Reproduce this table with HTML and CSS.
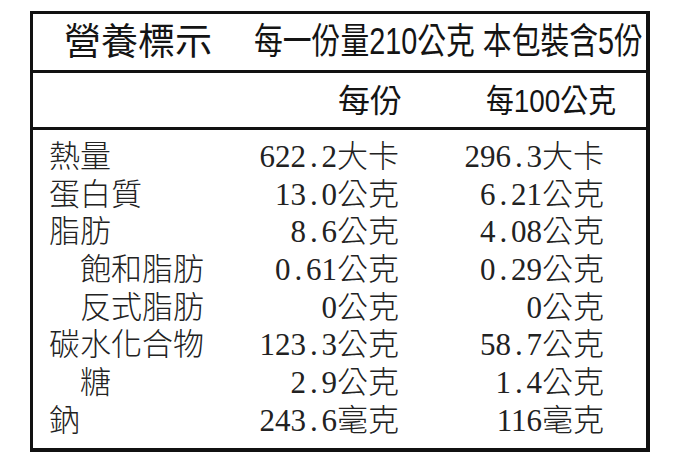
FILE: index.html
```html
<!DOCTYPE html>
<html lang="zh-Hant">
<head>
<meta charset="utf-8">
<title>營養標示</title>
<link rel="stylesheet" href="styles.css">
</head>
<body>
<div class="label">
  <div class="head">
    <span class="title">營養標示</span>
    <span class="serving"><span class="squeeze">每一份量210公克 本包裝含5份</span></span>
  </div>
  <div class="cols">
    <span class="per">每份</span>
    <span class="per100"><span class="squeeze2">每100公克</span></span>
  </div>
  <div class="body">
    <div class="name">熱量</div><div class="v">622<span class="dot">.</span>2大卡</div><div class="v">296<span class="dot">.</span>3大卡</div>
    <div class="name">蛋白質</div><div class="v">13<span class="dot">.</span>0公克</div><div class="v">6<span class="dot">.</span>21公克</div>
    <div class="name">脂肪</div><div class="v">8<span class="dot">.</span>6公克</div><div class="v">4<span class="dot">.</span>08公克</div>
    <div class="name sub">飽和脂肪</div><div class="v">0<span class="dot">.</span>61公克</div><div class="v">0<span class="dot">.</span>29公克</div>
    <div class="name sub">反式脂肪</div><div class="v">0公克</div><div class="v">0公克</div>
    <div class="name">碳水化合物</div><div class="v">123<span class="dot">.</span>3公克</div><div class="v">58<span class="dot">.</span>7公克</div>
    <div class="name sub">糖</div><div class="v">2<span class="dot">.</span>9公克</div><div class="v">1<span class="dot">.</span>4公克</div>
    <div class="name">鈉</div><div class="v">243<span class="dot">.</span>6毫克</div><div class="v">116毫克</div>
  </div>
</div>
</body>
</html>
```

FILE: styles.css
```css
html, body {
  margin: 0;
  padding: 0;
  background: #ffffff;
}

body {
  padding: 11px 0 0 30px;
}

.label {
  width: 620px;
  height: 441px;
  box-sizing: border-box;
  border-style: solid;
  border-color: #111111;
  border-width: 3px 4px 4px 3px;
  color: #1c1c1c;
}

.head {
  height: 56px;
  border-bottom: 3px solid #111111;
  display: flex;
  align-items: center;
  font-family: "Liberation Sans", "Noto Sans CJK TC", sans-serif;
  color: #141414;
}

.title {
  font-size: 37px;
  line-height: 1;
  padding-left: 31px;
  white-space: nowrap;
}

.serving {
  flex: none;
  width: 389px;
  margin-left: auto;
  margin-right: 3px;
  white-space: nowrap;
}

.squeeze {
  display: inline-block;
  width: 389px;
  font-size: 36px;
  line-height: 1;
  transform: scaleX(0.8);
  transform-origin: left center;
}

.cols {
  height: 57px;
  box-sizing: border-box;
  padding-top: 2px;
  border-bottom: 3px solid #111111;
  display: flex;
  align-items: center;
  font-family: "Liberation Sans", "Noto Sans CJK TC", sans-serif;
  font-size: 32px;
  line-height: 1;
  color: #141414;
}

.per {
  margin-left: 305px;
  white-space: nowrap;
}

.per100 {
  flex: none;
  width: 130px;
  margin-left: 84px;
  white-space: nowrap;
}

.squeeze2 {
  display: inline-block;
  width: 130px;
  transform: scaleX(0.87);
  transform-origin: left center;
}

.body {
  height: 318px;
  box-sizing: border-box;
  padding: 8px 0 0 16px;
  display: grid;
  grid-template-columns: 200px 150px 205px;
  grid-auto-rows: 37.7px;
  align-items: center;
  font-family: "Liberation Serif", "Noto Sans CJK TC", serif;
  font-size: 31px;
  font-weight: 300;
  line-height: 37.7px;
  color: #222222;
}

.name {
  white-space: nowrap;
}

.name.sub {
  padding-left: 31px;
}

.v {
  text-align: right;
  white-space: nowrap;
}

.dot {
  display: inline-block;
  width: 0.5em;
  text-align: center;
}
```
